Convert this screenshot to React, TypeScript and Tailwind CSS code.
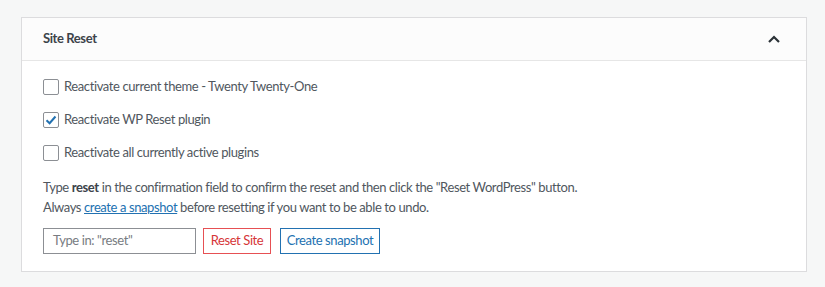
import React from "react";

export default function App() {
  return (
    <div className="w-[825px] h-[287px] bg-[#f6f7f7] pt-[17px] pl-[21px] tracking-[-0.4px]" style={{ fontFamily: 'Lato, sans-serif' }}>
      <div className="w-[786px] h-[255px] border border-[#dcdcde] bg-white flex flex-col">
        <div className="h-[43px] bg-[#fcfcfc] border-b border-[#e6e6e6] flex items-center justify-between pl-[21px] pr-[25px]">
          <span className="text-[13px] font-bold text-[#3c434a]">Site Reset</span>
          <svg width="14" height="10" viewBox="0 0 14 10" className="text-[#2c3338]">
            <path d="M2 8 L7 3 L12 8" fill="none" stroke="currentColor" strokeWidth="2.2" />
          </svg>
        </div>
        <div className="pl-[21px] pt-[18px] text-[13px] text-[#50575e]">
          <div className="flex flex-col gap-[17px]">
            {[
              ["Reactivate current theme - Twenty Twenty-One", false],
              ["Reactivate WP Reset plugin", true],
              ["Reactivate all currently active plugins", false],
            ].map(([label, checked], i) => (
              <label key={i} className="flex items-center h-[16px] gap-[5px]">
                <span className="w-[16px] h-[16px] border border-[#8c8f94] rounded-[2px] bg-white flex items-center justify-center">
                  {checked ? (
                    <svg width="12" height="12" viewBox="0 0 12 12">
                      <path d="M1.5 6.2 L4.6 9.2 L10.5 2.5" fill="none" stroke="#2271b1" strokeWidth="2" />
                    </svg>
                  ) : null}
                </span>
                <span>{label as string}</span>
              </label>
            ))}
          </div>
          <div className="mt-[16px] leading-[20px]">
            <p>
              Type <b className="font-bold text-[#3c434a]">reset</b> in the confirmation field to confirm the reset and then click the "Reset WordPress" button.
            </p>
            <p>
              Always <a className="text-[#2271b1] underline">create a snapshot</a> before resetting if you want to be able to undo.
            </p>
          </div>
          <div className="mt-[11px] flex items-center gap-[7px]">
            <div className="w-[153px] h-[26px] border border-[#8c8f94] flex items-center px-[9px] text-[#787c82]">Type in: "reset"</div>
            <div className="w-[68px] h-[26px] border border-[#e65054] text-[#d63638] flex items-center justify-center">Reset Site</div>
            <div className="ml-[2px] w-[100px] h-[26px] border border-[#2271b1] text-[#2271b1] flex items-center justify-center">Create snapshot</div>
          </div>
        </div>
      </div>
    </div>
  );
}
